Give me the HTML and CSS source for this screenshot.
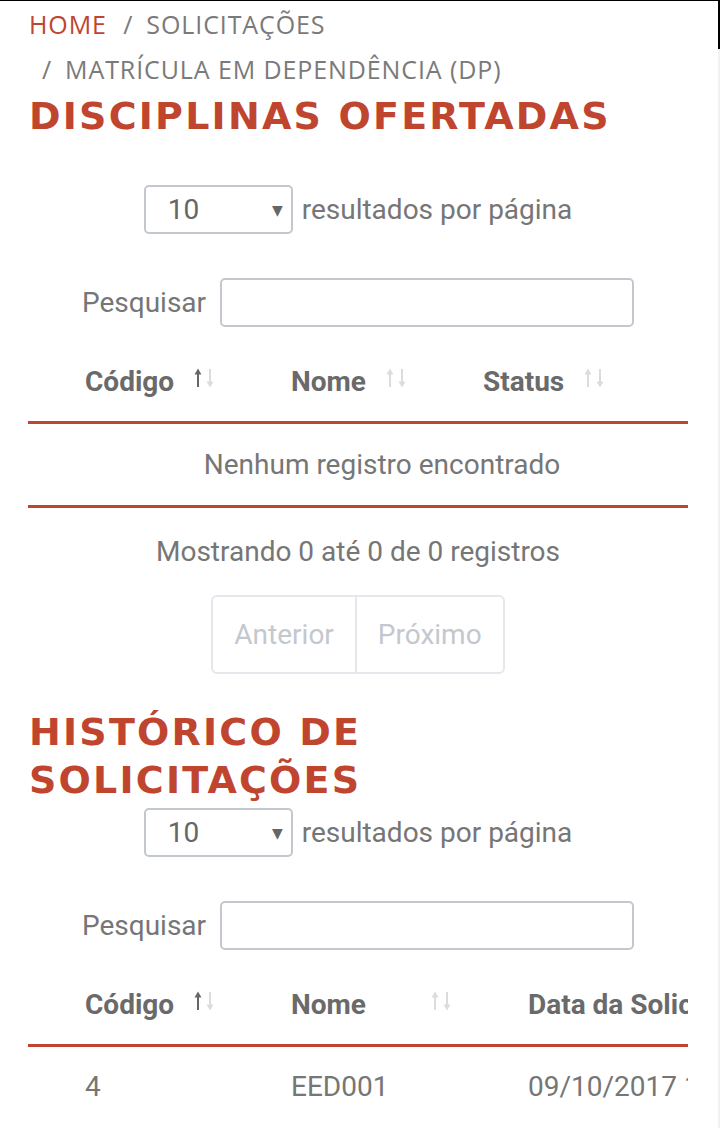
FILE: index.html
```html
<!DOCTYPE html>
<html lang="pt-BR">
<head>
<meta charset="utf-8">
<title>Matrícula em Dependência (DP)</title>
<link rel="stylesheet" href="styles.css">
</head>
<body>
<div class="frame-top"></div>
<div class="frame-bar"></div>
<main class="page">
  <nav class="breadcrumb">
    <a class="crumb crumb-home" href="#">HOME</a>
    <span class="crumb"><span class="sep">/</span>SOLICITAÇÕES</span>
    <span class="crumb"><span class="sep">/</span>MATRÍCULA EM DEPENDÊNCIA (DP)</span>
  </nav>

  <section class="section">
    <h1 class="title">DISCIPLINAS OFERTADAS</h1>
    <div class="length-row length-row-first">
      <div class="fake-select"><span>10</span><span class="caret">▼</span></div>
      <span class="length-label">resultados por página</span>
    </div>
    <div class="search-row">
      <label class="search-label">Pesquisar</label>
      <div class="search-input"></div>
    </div>
    <div class="scroll-head">
      <table class="dt dt-narrow">
        <thead>
          <tr>
            <th class="col-a"><div class="th-in"><span>Código</span><svg class="sort" viewBox="0 0 24 20"><g class="up act"><line x1="4" y1="19" x2="4" y2="4"/><polygon points="0.5,6.5 4,0.5 7.5,6.5"/></g><g class="down"><line x1="16" y1="1" x2="16" y2="16"/><polygon points="12.5,13.5 16,19.5 19.5,13.5"/></g></svg></div></th>
            <th class="col-b"><div class="th-in"><span>Nome</span><svg class="sort" viewBox="0 0 24 20"><g class="up"><line x1="4" y1="19" x2="4" y2="4"/><polygon points="0.5,6.5 4,0.5 7.5,6.5"/></g><g class="down"><line x1="16" y1="1" x2="16" y2="16"/><polygon points="12.5,13.5 16,19.5 19.5,13.5"/></g></svg></div></th>
            <th class="col-c"><div class="th-in"><span>Status</span><svg class="sort" viewBox="0 0 24 20"><g class="up"><line x1="4" y1="19" x2="4" y2="4"/><polygon points="0.5,6.5 4,0.5 7.5,6.5"/></g><g class="down"><line x1="16" y1="1" x2="16" y2="16"/><polygon points="12.5,13.5 16,19.5 19.5,13.5"/></g></svg></div></th>
          </tr>
        </thead>
      </table>
    </div>
    <div class="scroll-body">
      <table class="dt dt-full">
        <tbody>
          <tr><td class="empty" colspan="3">Nenhum registro encontrado</td></tr>
        </tbody>
      </table>
    </div>
    <div class="info">Mostrando 0 até 0 de 0 registros</div>
    <div class="pager">
      <span class="page-btn">Anterior</span>
      <span class="page-btn">Próximo</span>
    </div>
  </section>

  <section class="section">
    <h1 class="title title-second">HISTÓRICO DE SOLICITAÇÕES</h1>
    <div class="length-row">
      <div class="fake-select"><span>10</span><span class="caret">▼</span></div>
      <span class="length-label">resultados por página</span>
    </div>
    <div class="search-row">
      <label class="search-label">Pesquisar</label>
      <div class="search-input"></div>
    </div>
    <div class="scroll-clip">
      <table class="dt dt-wide">
        <thead>
          <tr>
            <th class="col-a"><div class="th-in"><span>Código</span><svg class="sort" viewBox="0 0 24 20"><g class="up act"><line x1="4" y1="19" x2="4" y2="4"/><polygon points="0.5,6.5 4,0.5 7.5,6.5"/></g><g class="down"><line x1="16" y1="1" x2="16" y2="16"/><polygon points="12.5,13.5 16,19.5 19.5,13.5"/></g></svg></div></th>
            <th class="col-b2"><div class="th-in"><span>Nome</span><svg class="sort" viewBox="0 0 24 20"><g class="up"><line x1="4" y1="19" x2="4" y2="4"/><polygon points="0.5,6.5 4,0.5 7.5,6.5"/></g><g class="down"><line x1="16" y1="1" x2="16" y2="16"/><polygon points="12.5,13.5 16,19.5 19.5,13.5"/></g></svg></div></th>
            <th class="col-c2"><div class="th-in"><span>Data da Solicitação</span><svg class="sort" viewBox="0 0 24 20"><g class="up"><line x1="4" y1="19" x2="4" y2="4"/><polygon points="0.5,6.5 4,0.5 7.5,6.5"/></g><g class="down"><line x1="16" y1="1" x2="16" y2="16"/><polygon points="12.5,13.5 16,19.5 19.5,13.5"/></g></svg></div></th>
          </tr>
        </thead>
        <tbody>
          <tr>
            <td>4</td>
            <td>EED001</td>
            <td>09/10/2017 10:32</td>
          </tr>
        </tbody>
      </table>
    </div>
  </section>
</main>
</body>
</html>
```

FILE: styles.css
```css
html, body {
  margin: 0;
  padding: 0;
  background: #ffffff;
}

body {
  font-family: Roboto, "Liberation Sans", sans-serif;
  color: #767676;
  overflow: hidden;
  height: 1128px;
  position: relative;
}

.frame-top {
  position: absolute;
  top: 0;
  left: 0;
  width: 719px;
  height: 1px;
  background: #000;
  z-index: 2;
}

.frame-bar {
  position: absolute;
  top: 0;
  right: 0;
  width: 2px;
  height: 1128px;
  background: linear-gradient(#000 0, #000 49px, #f2f2f2 49px, #f2f2f2 100%);
  z-index: 2;
}

.page {
  padding: 2px 32px 0 28px;
}

/* breadcrumb */
.breadcrumb {
  font-family: "Open Sans", "DejaVu Sans", sans-serif;
  font-size: 25px;
  line-height: 45px;
  color: #7a7a7a;
  padding-left: 1px;
  letter-spacing: 0.9px;
}

.crumb {
  display: inline-block;
  white-space: nowrap;
  text-decoration: none;
  color: #7a7a7a;
}

.crumb + .crumb {
  padding-left: 9px;
}

.crumb-home {
  color: #c0452f;
}

.sep {
  padding-right: 13px;
}

.crumb + .crumb + .crumb {
  padding-left: 13px;
}

/* headings */
.title {
  margin: 0;
  font-family: "DejaVu Sans", "Open Sans", sans-serif;
  font-weight: 700;
  font-size: 38px;
  line-height: 48px;
  color: #c0452f;
  letter-spacing: 2.2px;
  padding-left: 1px;
}

.title-second {
  margin-top: 34px;
}

/* length select */
.length-row {
  display: flex;
  justify-content: center;
  align-items: center;
  gap: 9px;
  margin-top: 4px;
  font-size: 28px;
}

.length-row-first {
  margin-top: 45px;
}

.fake-select {
  box-sizing: border-box;
  width: 149px;
  height: 49px;
  border: 2px solid #c3c7ce;
  border-radius: 5px;
  display: flex;
  align-items: center;
  justify-content: space-between;
  padding: 0 8px 0 22px;
  color: #666;
}

.caret {
  font-size: 14px;
  color: #666;
  font-family: "DejaVu Sans", sans-serif;
}

.length-label {
  color: #767676;
}

/* search */
.search-row {
  display: flex;
  justify-content: center;
  align-items: center;
  gap: 14px;
  margin-top: 44px;
  font-size: 28px;
}

.search-input {
  box-sizing: border-box;
  width: 414px;
  height: 49px;
  border: 2px solid #c3c7ce;
  border-radius: 5px;
}

/* tables */
.dt {
  border-collapse: collapse;
  table-layout: fixed;
}

.dt th,
.dt td {
  box-sizing: border-box;
  padding: 24px 16px 24px 57px;
  line-height: 30px;
  font-size: 28px;
  text-align: left;
  white-space: nowrap;
  overflow: hidden;
}

.dt th {
  font-weight: 700;
  color: #6a6a6a;
}

.th-in {
  display: flex;
  justify-content: space-between;
  align-items: center;
}

.sort {
  width: 24px;
  height: 20px;
  flex: none;
  margin-top: -8px;
}

.sort line {
  stroke: #dcdcdc;
  stroke-width: 2;
}

.sort polygon {
  fill: #dcdcdc;
}

.sort .act line {
  stroke: #666;
}

.sort .act polygon {
  fill: #666;
}

.scroll-head {
  margin-top: 16px;
  border-bottom: 3px solid #c0452f;
}

.dt-narrow {
  width: 596px;
}

.col-a { width: 206px; }
.col-b { width: 192px; }
.col-c { width: 198px; }

.scroll-body {
  border-bottom: 3px solid #c0452f;
}

.dt-full {
  width: 100%;
}

.dt td.empty {
  text-align: center;
  padding: 25px 9px 25px 57px;
  line-height: 31px;
}

.info {
  margin-top: 29px;
  text-align: center;
  font-size: 28px;
  line-height: 30px;
}

.pager {
  display: flex;
  width: max-content;
  margin: 28px auto 0;
  border: 2px solid #e4e7eb;
  border-radius: 6px;
}

.page-btn {
  padding: 22px 21px 22px 21px;
  line-height: 31px;
  font-size: 28px;
  color: #c4c8ce;
}

.page-btn + .page-btn {
  border-left: 2px solid #e4e7eb;
}

.scroll-clip {
  margin-top: 16px;
  overflow: hidden;
  width: 660px;
}

.dt-wide {
  width: 900px;
}

.col-b2 { width: 237px; }
.col-c2 { width: 457px; }

.dt-wide thead th {
  border-bottom: 3px solid #c0452f;
}

.dt-wide td {
  color: #767676;
  padding-top: 25px;
}
```
